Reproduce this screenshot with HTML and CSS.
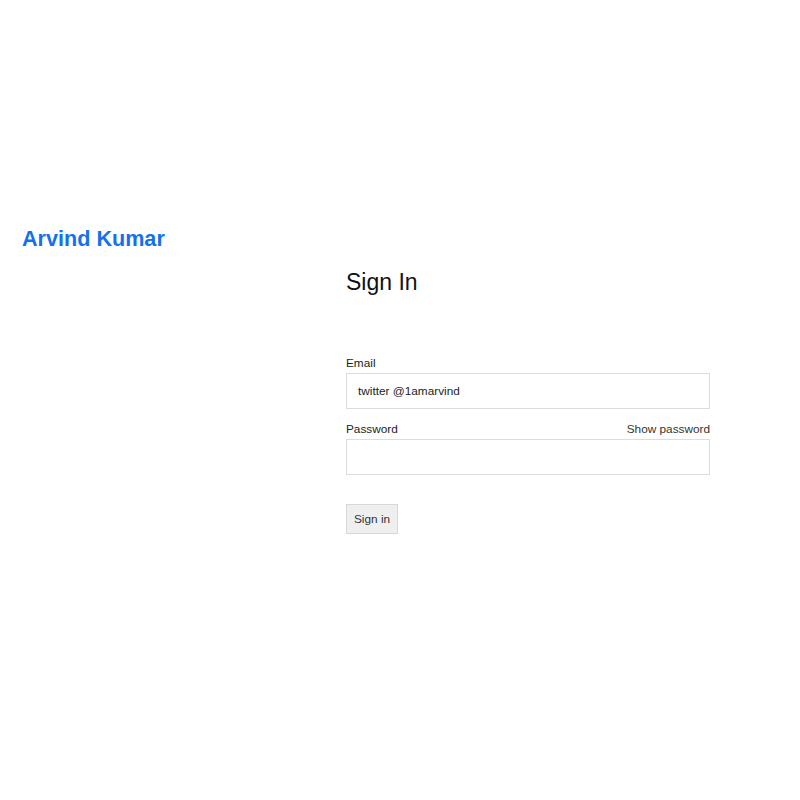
FILE: index.html
```html
<!DOCTYPE html>
<html lang="en">
<head>
<meta charset="utf-8">
<title>Sign In</title>
<link rel="stylesheet" href="styles.css">
</head>
<body>
<header class="site-header">
  <a class="brand" href="#">Arvind Kumar</a>
</header>
<main class="main">
  <form class="signin">
    <h1 class="title">Sign In</h1>
    <div class="field field-email">
      <label class="label" for="email">Email</label>
      <input class="input" id="email" type="text" value="twitter @1amarvind">
    </div>
    <div class="field field-password">
      <div class="label-row">
        <label class="label" for="password">Password</label>
        <span class="show">Show password</span>
      </div>
      <input class="input" id="password" type="password">
    </div>
    <button class="btn" type="button">Sign in</button>
  </form>
</main>
</body>
</html>
```
FILE: styles.css
```css
* { box-sizing: border-box; }
html, body { margin: 0; padding: 0; background: #fff; }
body {
  font-family: "Liberation Sans", Arial, sans-serif;
  color: #222;
  padding-top: 226px;
}
.site-header {
  padding-left: 22px;
  height: 25px;
}
.brand {
  font-size: 21.6px;
  line-height: 25px;
  font-weight: bold;
  color: #1570ef;
  text-decoration: none;
  display: block;
}
.main {
  padding-left: 346px;
}
.signin {
  width: 364px;
  display: flex;
  flex-direction: column;
}
.title {
  margin: 18px 0 0;
  font-size: 23px;
  font-weight: normal;
  line-height: 27px;
  color: #111;
}
.field-email { margin-top: 60px; }
.field-password { margin-top: 13px; }
.label {
  display: block;
  font-size: 11.8px;
  line-height: 14px;
  color: #222;
}
.label-row {
  display: flex;
  justify-content: space-between;
  align-items: baseline;
}
.show {
  font-size: 11.8px;
  line-height: 14px;
  color: #333;
}
.input {
  display: block;
  width: 100%;
  height: 36px;
  margin-top: 3px;
  border: 1px solid #dcdcdc;
  padding: 0 11px;
  font-family: inherit;
  font-size: 11.8px;
  color: #222;
  background: #fff;
  outline: none;
}
.btn {
  align-self: flex-start;
  margin-top: 29px;
  height: 30px;
  padding: 0 7px;
  font-family: inherit;
  font-size: 11.8px;
  color: #333;
  background: #efefef;
  border: 1px solid #d8d8d8;
  border-radius: 0;
}
```
